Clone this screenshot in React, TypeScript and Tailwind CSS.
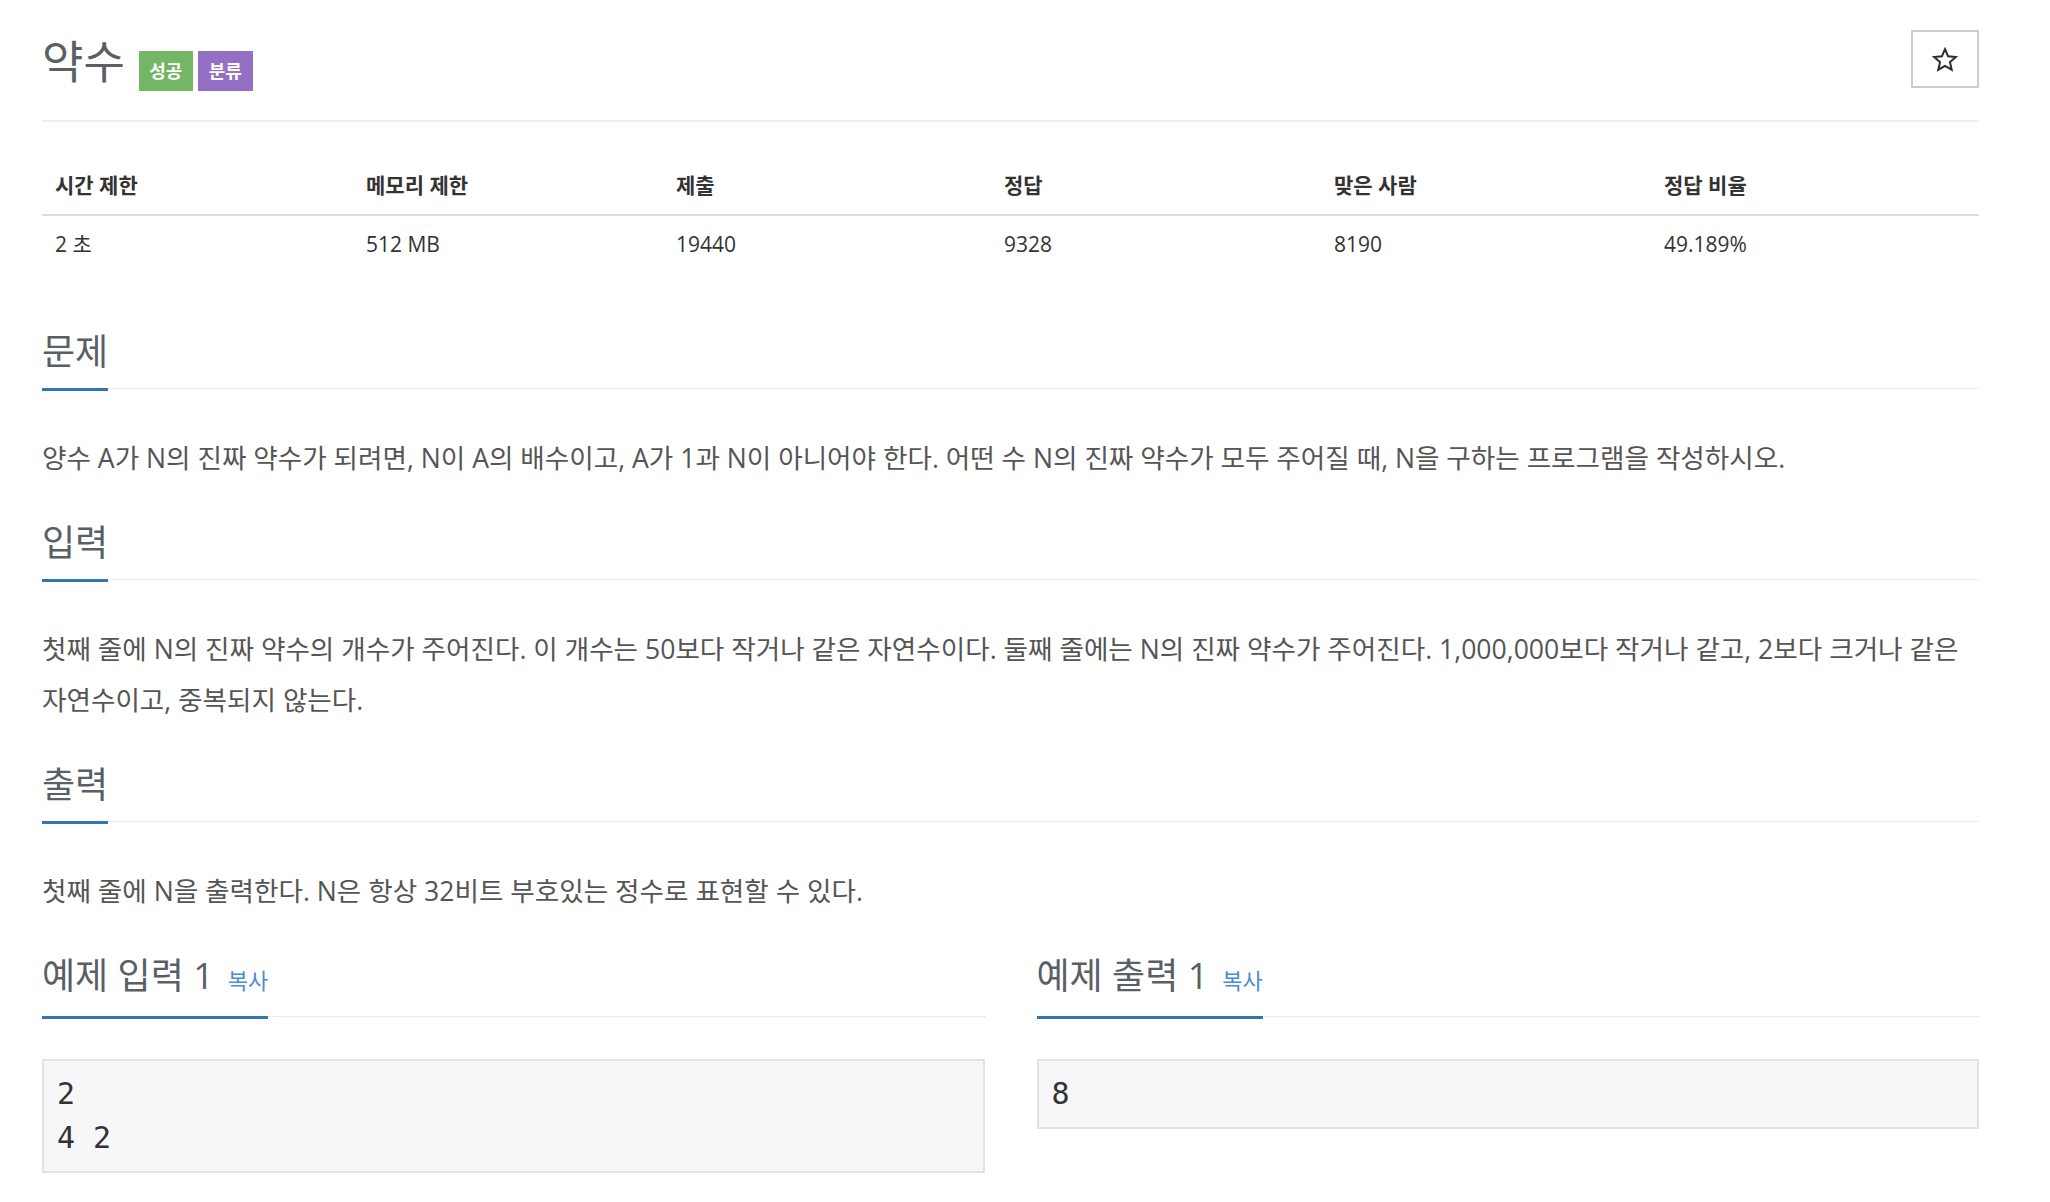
import type { ReactNode } from 'react';

const STATS = [
  { label: '시간 제한', value: '2 초' },
  { label: '메모리 제한', value: '512 MB' },
  { label: '제출', value: '19440' },
  { label: '정답', value: '9328' },
  { label: '맞은 사람', value: '8190' },
  { label: '정답 비율', value: '49.189%' },
];

function StarIcon() {
  return (
    <svg width="26" height="25" viewBox="0 0 26 25" fill="none">
      <path
        d="M13 2.2l3.1 7.1 7.7.7-5.8 5.1 1.7 7.6L13 18.8l-6.7 3.9 1.7-7.6-5.8-5.1 7.7-.7z"
        stroke="#2b2b2b"
        strokeWidth="2"
        strokeLinejoin="miter"
      />
    </svg>
  );
}

function Headline({ children, copy }: { children: ReactNode; copy?: boolean }) {
  return (
    <div className="flex border-b border-dotted border-[#d9dde3]">
      <h2 className="-mb-[3px] border-b-[3px] border-[#3276b1] pt-[2px] pb-[14px] text-[36px] leading-[44px] font-normal text-[#5a5f66]">
        {children}
        {copy && <span className="ml-[14px] text-[22px] text-[#4b8bd1]">복사</span>}
      </h2>
    </div>
  );
}

function Section({ title, children }: { title: string; children: ReactNode }) {
  return (
    <section className="mb-[35px]">
      <Headline>{title}</Headline>
      <p className="-mr-[20px] mt-[44px] text-[26.6px] leading-[51px] text-[#555] break-keep">{children}</p>
    </section>
  );
}

function Sample({ title, data }: { title: string; data: string }) {
  return (
    <div>
      <Headline copy>{title}</Headline>
      <pre className="mt-[42px] border-2 border-[#e1e1e8] bg-[#f7f7f9] px-[13px] py-[11px] font-['DejaVu_Sans_Mono',monospace] text-[30px] leading-[44px] text-[#333]">
        {data}
      </pre>
    </div>
  );
}

export default function App() {
  return (
    <div className="min-h-screen bg-white font-['Open_Sans','Noto_Sans_CJK_KR',sans-serif]">
      <div className="ml-[42px] w-[1937px] pb-[30px]">
        {/* header */}
        <div className="flex h-[88px] items-start justify-between pt-[30px]">
          <div className="flex items-start">
            <h1 className="mt-[6px] text-[45px] leading-[52px] font-normal text-[#5a5f66]">약수</h1>
            <span className="ml-[14px] mt-[21px] w-[54px] bg-[#74b566] text-center text-[18px] leading-[40px] font-bold text-white">
              성공
            </span>
            <span className="ml-[5px] mt-[21px] w-[55px] bg-[#9370c4] text-center text-[18px] leading-[40px] font-bold text-white">
              분류
            </span>
          </div>
          <button className="flex h-[58px] w-[68px] items-center justify-center border-2 border-[#ccc] bg-white">
            <StarIcon />
          </button>
        </div>
        <div className="mt-[32px] border-t-2 border-[#eee]" />

        {/* stats table */}
        <div className="mt-[38px] text-[21px] leading-[28px] text-[#333]">
          <div className="grid grid-cols-[311px_310px_328px_330px_330px_1fr] border-b-2 border-[#ddd]">
            {STATS.map((s) => (
              <div key={s.label} className="pl-[13px] pt-[11px] pb-[15px] font-bold">
                {s.label}
              </div>
            ))}
          </div>
          <div className="grid grid-cols-[311px_310px_328px_330px_330px_1fr]">
            {STATS.map((s) => (
              <div key={s.label} className="pl-[13px] py-[14px]">
                {s.value}
              </div>
            ))}
          </div>
        </div>

        {/* problem body */}
        <div className="mt-[56px]">
          <Section title="문제">
            양수 A가 N의 진짜 약수가 되려면, N이 A의 배수이고, A가 1과 N이 아니어야 한다. 어떤 수 N의 진짜 약수가 모두 주어질 때, N을 구하는
            프로그램을 작성하시오.
          </Section>
          <Section title="입력">
            첫째 줄에 N의 진짜 약수의 개수가 주어진다. 이 개수는 50보다 작거나 같은 자연수이다. 둘째 줄에는 N의 진짜 약수가 주어진다.
            1,000,000보다 작거나 같고, 2보다 크거나 같은 자연수이고, 중복되지 않는다.
          </Section>
          <Section title="출력">첫째 줄에 N을 출력한다. N은 항상 32비트 부호있는 정수로 표현할 수 있다.</Section>

          <div className="grid grid-cols-2 gap-[52px]">
            <Sample title="예제 입력 1" data={'2\n4 2'} />
            <Sample title="예제 출력 1" data="8" />
          </div>
        </div>
      </div>
    </div>
  );
}
